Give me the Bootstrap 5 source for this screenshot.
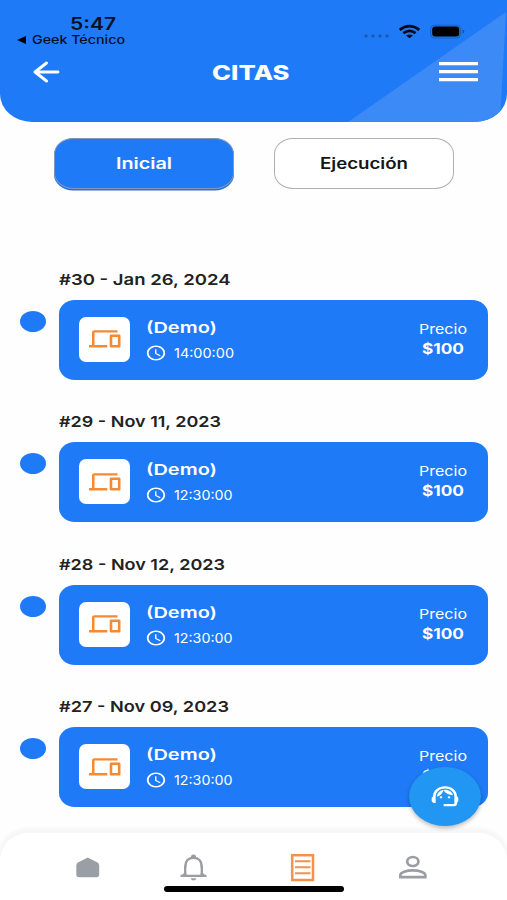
<!DOCTYPE html>
<html lang="es">
<head>
<meta charset="utf-8">
<meta name="viewport" content="width=device-width, initial-scale=1">
<title>Citas</title>
<link href="https://cdn.jsdelivr.net/npm/bootstrap@5.3.0/dist/css/bootstrap.min.css" rel="stylesheet">
<style>
  :root { --brand: #1f7af7; --accent: #f58a34; --muted: #9a9ea3; }
  body { font-family: Inter, "Open Sans", sans-serif; background: #fefefe; color: #222; }
  svg { display: block; flex: none; }
  .screen { height: 900px; }
  /* Labels are stretched horizontally to the width in data-w */
  .fit { display: inline-block; white-space: nowrap; transform-origin: 0 50%; }
  .top-bar { height: 122px; background: var(--brand); border-radius: 0 0 32px 32px / 0 0 28px 28px; }
  .top-shine { position: absolute; inset: 0; }
  .status-row { height: 50px; padding: 14px 46px 0 17px; color: #06101f; }
  .clock-text { font-size: 17px; line-height: 20px; font-weight: 600; padding-left: 53px; }
  .back-app { font-size: 11.7px; line-height: 12px; font-weight: 500; gap: 5px; }
  .title-row { height: 44px; padding: 0 29px 0 33px; }
  .page-title { font-size: 20px; line-height: 24px; font-weight: 800; padding-top: 1px; }
  .menu-slot { width: 45px; }
  .tab-row { padding: 16px 53px 0 54px; height: 106.5px; }
  .tab-btn { width: 180px; height: 51px; border: 1.4px solid #b0b0b0; border-radius: 19px / 16px; padding: 1px 0 0; font-size: 15.3px; font-weight: 600; color: #151515; background: #fff; }
  .tab-btn.chosen { background: var(--brand); color: #fff; border-color: #7f97b9; box-shadow: 0 1.5px 0 #2b70d5; margin-left: -.5px; }
  .visit { height: 142.5px; padding: 0 19.5px 0 20px; }
  .visit-date { font-size: 15.2px; line-height: 20px; font-weight: 600; padding: 41px 0 0 39px; height: 71px; }
  .visit-dot { width: 26px; height: 21px; border-radius: 50%; background: var(--brand); margin: 11px 12.5px 0 0; }
  .visit-card { height: 80px; border-radius: 16px / 14px; background: var(--brand); color: #fff; padding: 17px 20.5px 0 20.5px; }
  .device-box { width: 51px; height: 45px; border-radius: 7px; background: #fff; margin-right: 17px; }
  .visit-name { font-size: 15.2px; line-height: 20px; font-weight: 600; height: 26px; padding-top: 1px; margin-left: -.7px; }
  .visit-time { font-size: 13.5px; line-height: 20px; gap: 6.5px; margin-left: -2px; }
  .price-label { font-size: 13.2px; line-height: 20px; padding-top: 2px; }
  .price-value { font-size: 15px; line-height: 20px; font-weight: 700; padding-top: .3px; }
  .support-btn { position: absolute; left: 409px; top: 767px; width: 72px; height: 59px; border-radius: 50%; background: #2196f3; box-shadow: 0 2px 4px rgba(0,0,0,.28); }
  .tab-bar { position: absolute; left: 0; right: 0; bottom: 0; height: 67px; background: #fff; border-radius: 28px 28px 0 0; box-shadow: 0 -2px 3px 3px #f7f7f7; }
  .tab-icons { padding-left: 48px; gap: 31px; }
  .tab-icons svg:nth-child(2) { margin-left: -3px; }
  .tab-icons svg:nth-child(4) { margin-left: 3px; }
  .home-line { position: absolute; left: 164px; bottom: 8.5px; width: 180px; height: 5.5px; border-radius: 3px; background: #000; }
</style>
</head>
<body>
<svg width="0" height="0" class="position-absolute">
  <symbol id="devices" viewBox="0 0 32 18" preserveAspectRatio="none">
    <path d="M28.500 0.200H5.500Q3 0.200 3 2.300V14.900H0V17.400H18.300V14.900H5.500V2.400H28.500ZM30.200 4.600H22Q20.700 4.600 20.700 5.800V16.200Q20.700 17.400 22 17.400H30.200Q31.500 17.400 31.500 16.200V5.800Q31.500 4.600 30.200 4.600ZM28.900 15H23.300V7H28.900Z" fill="#f58a34" fill-rule="evenodd"/>
  </symbol>
  <symbol id="clock" viewBox="0 0 24 24" preserveAspectRatio="none">
    <path fill="#fff" d="M12 2C6.500 2 2 6.500 2 12s4.500 10 10 10 10-4.500 10-10S17.500 2 12 2zm0 18c-4.400 0-8-3.600-8-8s3.600-8 8-8 8 3.600 8 8-3.600 8-8 8zm.5-13H11v6l5.200 3.200.8-1.300-4.500-2.700z"/>
  </symbol>
</svg>

<main class="screen position-relative overflow-hidden">
  <header class="top-bar position-relative overflow-hidden">
    <svg class="top-shine" width="507" height="122"><path d="M348 122L506 12L500 122Z" fill="#3c8af6"/></svg>
    <div class="position-relative">
      <div class="status-row d-flex justify-content-between align-items-start">
        <div>
          <div class="clock-text"><span class="fit" data-w="46">5:47</span></div>
          <div class="back-app d-flex align-items-center"><svg width="10" height="8"><path d="M0 4L9 0V8Z"/></svg><span class="fit" data-w="93">Geek Técnico</span></div>
        </div>
        <div class="d-flex pt-2">
          <svg width="97" height="16" viewBox="364 22 97 16" overflow="visible">
            <g fill="#1c5ab2"><circle cx="366" cy="36" r="1.700"/><circle cx="373" cy="36" r="1.700"/><circle cx="380" cy="36" r="1.700"/><circle cx="387" cy="36" r="1.700"/></g>
            <g fill="none" stroke="#050b16" stroke-width="2.700"><path d="M399.700 29.800Q409.500 22.500 419.300 29.800"/><path d="M403.400 33.200Q409.500 28.700 415.600 33.200"/></g>
            <path d="M406 35.600Q409.500 33.200 413 35.600L409.500 38.300Z" fill="#050b16"/>
            <rect x="430.600" y="25.200" width="30" height="12.800" rx="4" fill="none" stroke="#185fc2"/>
            <rect x="432.200" y="26.600" width="27" height="10" rx="3" fill="#000"/>
            <path d="M462.300 29.600v4q2-.5 2-2t-2-2z" fill="#1756ae"/>
          </svg>
        </div>
      </div>
      <div class="title-row d-flex align-items-center justify-content-between">
        <svg width="27" height="22" viewBox="0 0 27 22" fill="none" stroke="#fff" stroke-width="2.900" stroke-linecap="round" stroke-linejoin="round"><path d="M25 11H2M13.500 2L2 11L13.500 20"/></svg>
        <div class="page-title text-white ps-2"><span class="fit" data-w="77.500">CITAS</span></div>
        <div class="menu-slot d-flex justify-content-end"><svg width="39" height="20" fill="#fff"><path d="M0 0H39V3.200H0ZM0 8H39V11.200H0ZM0 16H39V19.200H0Z"/></svg></div>
      </div>
    </div>
  </header>

  <nav class="tab-row d-flex justify-content-between align-items-start">
    <button class="tab-btn chosen"><span class="fit" data-w="56">Inicial</span></button>
    <button class="tab-btn"><span class="fit" data-w="88">Ejecución</span></button>
  </nav>

  <section>
    <article class="visit">
      <div class="visit-date"><span class="fit" data-w="171.500">#30 - Jan 26, 2024</span></div>
      <div class="d-flex">
        <div class="visit-dot"></div>
        <div class="visit-card flex-grow-1 d-flex align-items-start">
          <div class="device-box d-flex align-items-center justify-content-center"><svg width="32" height="18"><use href="#devices"/></svg></div>
          <div class="flex-grow-1">
            <div class="visit-name"><span class="fit" data-w="71">(Demo)</span></div>
            <div class="visit-time d-flex align-items-center"><svg width="22" height="18"><use href="#clock"/></svg><span class="fit" data-w="60">14:00:00</span></div>
          </div>
          <div class="text-center"><div class="price-label"><span class="fit" data-w="48">Precio</span></div><div class="price-value"><span class="fit" data-w="42">$100</span></div></div>
        </div>
      </div>
    </article>
    <article class="visit">
      <div class="visit-date"><span class="fit" data-w="162">#29 - Nov 11, 2023</span></div>
      <div class="d-flex">
        <div class="visit-dot"></div>
        <div class="visit-card flex-grow-1 d-flex align-items-start">
          <div class="device-box d-flex align-items-center justify-content-center"><svg width="32" height="18"><use href="#devices"/></svg></div>
          <div class="flex-grow-1">
            <div class="visit-name"><span class="fit" data-w="71">(Demo)</span></div>
            <div class="visit-time d-flex align-items-center"><svg width="22" height="18"><use href="#clock"/></svg><span class="fit" data-w="58.500">12:30:00</span></div>
          </div>
          <div class="text-center"><div class="price-label"><span class="fit" data-w="48">Precio</span></div><div class="price-value"><span class="fit" data-w="42">$100</span></div></div>
        </div>
      </div>
    </article>
    <article class="visit">
      <div class="visit-date"><span class="fit" data-w="166">#28 - Nov 12, 2023</span></div>
      <div class="d-flex">
        <div class="visit-dot"></div>
        <div class="visit-card flex-grow-1 d-flex align-items-start">
          <div class="device-box d-flex align-items-center justify-content-center"><svg width="32" height="18"><use href="#devices"/></svg></div>
          <div class="flex-grow-1">
            <div class="visit-name"><span class="fit" data-w="71">(Demo)</span></div>
            <div class="visit-time d-flex align-items-center"><svg width="22" height="18"><use href="#clock"/></svg><span class="fit" data-w="58.500">12:30:00</span></div>
          </div>
          <div class="text-center"><div class="price-label"><span class="fit" data-w="48">Precio</span></div><div class="price-value"><span class="fit" data-w="42">$100</span></div></div>
        </div>
      </div>
    </article>
    <article class="visit">
      <div class="visit-date"><span class="fit" data-w="170">#27 - Nov 09, 2023</span></div>
      <div class="d-flex">
        <div class="visit-dot"></div>
        <div class="visit-card flex-grow-1 d-flex align-items-start">
          <div class="device-box d-flex align-items-center justify-content-center"><svg width="32" height="18"><use href="#devices"/></svg></div>
          <div class="flex-grow-1">
            <div class="visit-name"><span class="fit" data-w="71">(Demo)</span></div>
            <div class="visit-time d-flex align-items-center"><svg width="22" height="18"><use href="#clock"/></svg><span class="fit" data-w="58.500">12:30:00</span></div>
          </div>
          <div class="text-center"><div class="price-label"><span class="fit" data-w="48">Precio</span></div><div class="price-value"><span class="fit" data-w="42">$100</span></div></div>
        </div>
      </div>
    </article>
  </section>

  <footer class="tab-bar">
    <div class="tab-icons d-flex align-items-center h-100">
      <svg width="78" height="67" viewBox="48 833 78 67"><path d="M76.300 865.500Q76.300 863.500 78 862.500L87.700 857.500L97.500 862.500Q99.200 863.500 99.200 865.500V874.500Q99.200 877.300 96.500 877.300H79Q76.300 877.300 76.300 874.500Z" fill="#9a9fa6"/></svg>
      <svg width="78" height="67" viewBox="154 833 78 67">
        <path d="M185.300 876V866.500C185.300 861 188.500 857.800 193.500 857.800S201.700 861 201.700 866.500V876" fill="none" stroke="#9a9ea3" stroke-width="2.600"/>
        <path d="M180.500 874.700H206.500V876.900H180.500ZM184 873H203L206 876H181ZM191 855.700Q193.500 853.500 196 855.700V858H191ZM190.500 878.300H196.500Q195.500 880.600 193.500 880.600T190.500 878.300Z" fill="#9a9ea3"/>
        <rect x="186.600" y="868" width="13.800" height="6.700" fill="#fff"/>
      </svg>
      <svg width="78" height="67" viewBox="263 833 78 67"><g fill="none" stroke="#f4914a"><rect x="292.200" y="855.200" width="20.800" height="24.800" stroke-width="2.500"/><path d="M295 861.300H310.500M295 867.300H310.500M295 873.300H310.500" stroke-width="1.900"/></g></svg>
      <svg width="78" height="67" viewBox="375 833 78 67"><g fill="none" stroke="#9a9ea3" stroke-width="2.700"><ellipse cx="412.800" cy="861.500" rx="5.600" ry="4.500"/><path d="M400.300 877.200V875.200C400.300 872.300 406.500 870.400 412.800 870.400S425.300 872.300 425.300 875.200V877.200Z"/></g></svg>
    </div>
    <div class="home-line"></div>
  </footer>

  <button class="support-btn btn border-0 p-0 d-flex align-items-center justify-content-center" aria-label="Soporte">
    <svg width="32" height="26.500" viewBox="0 0 24 24" preserveAspectRatio="none" fill="#fff"><path d="M21 12.220C21 6.730 16.740 3 12 3c-4.690 0-9 3.650-9 9.280-.6.340-1 .980-1 1.720v2c0 1.100.9 2 2 2h1v-6.100c0-3.870 3.130-7 7-7s7 3.130 7 7V19h-8v2h8c1.100 0 2-.9 2-2v-1.220c.590-.310 1-.920 1-1.640v-2.300c0-.700-.410-1.310-1-1.620z"/><circle cx="9" cy="13" r="1"/><circle cx="15" cy="13" r="1"/><path d="M18 11.030C17.520 8.180 15.040 6 12.050 6c-3.030 0-6.290 2.510-6.030 6.450 2.470-1.010 4.330-3.210 4.860-5.890 1.310 2.630 4 4.440 7.120 4.470z"/></svg>
  </button>
</main>

<script src="https://cdn.jsdelivr.net/npm/bootstrap@5.3.0/dist/js/bootstrap.bundle.min.js"></script>
<script>
  // Stretch each label to its intended width and let the layout follow it
  document.querySelectorAll('.fit').forEach(function (el) {
    var natural = el.getBoundingClientRect().width, target = parseFloat(el.dataset.w);
    el.style.transform = 'scaleX(' + target / natural + ')';
    el.style.marginRight = (target - natural) + 'px';
  });
</script>
</body>
</html>
